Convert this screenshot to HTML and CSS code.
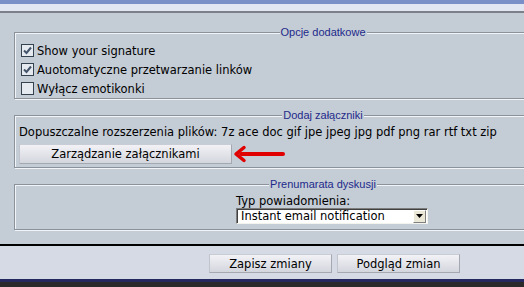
FILE: index.html
```html
<!DOCTYPE html>
<html lang="pl">
<head>
	<meta charset="utf-8">
	<link rel="stylesheet" href="styles.css">
</head>
<body>
	<div class="topbar"></div>
	<div class="panel">
		<fieldset class="box opts">
			<legend>Opcje dodatkowe</legend>
			<label class="row">
				<svg class="cb" width="13" height="13" viewBox="0 0 13 13"><rect x="0.5" y="0.5" width="12" height="12" fill="#e4eaf0" stroke="#34414f"/><path d="M3 6.5 L5.5 9 L10 3.5" fill="none" stroke="#44546a" stroke-width="2"/></svg>
				Show your signature
			</label>
			<label class="row">
				<svg class="cb" width="13" height="13" viewBox="0 0 13 13"><rect x="0.5" y="0.5" width="12" height="12" fill="#e4eaf0" stroke="#34414f"/><path d="M3 6.5 L5.5 9 L10 3.5" fill="none" stroke="#44546a" stroke-width="2"/></svg>
				Auotomatyczne przetwarzanie linków
			</label>
			<label class="row">
				<svg class="cb" width="13" height="13" viewBox="0 0 13 13"><rect x="0.5" y="0.5" width="12" height="12" fill="#e4eaf0" stroke="#34414f"/></svg>
				Wyłącz emotikonki
			</label>
		</fieldset>

		<fieldset class="box attach">
			<legend>Dodaj załączniki</legend>
			<div class="exts">Dopuszczalne rozszerzenia plików: 7z ace doc gif jpe jpeg jpg pdf png rar rtf txt zip</div>
			<div class="attach-row">
				<button class="btn btn-wide">Zarządzanie załącznikami</button>
				<svg class="arrow" width="52" height="18" viewBox="0 0 52 18"><path d="M8 9 H50" stroke="#e00000" stroke-width="4" stroke-linecap="round"/><path d="M11 2.5 L3 9 L11 15.5" fill="none" stroke="#e00000" stroke-width="3.5" stroke-linecap="round" stroke-linejoin="round"/></svg>
			</div>
		</fieldset>

		<fieldset class="box subscr">
			<legend>Prenumarata dyskusji</legend>
			<div class="notify">
				<div class="notify-label">Typ powiadomienia:</div>
				<div class="select">
					<span class="select-text">Instant email notification</span>
					<span class="select-btn"><svg width="7" height="4" viewBox="0 0 7 4"><path d="M0 0 H7 L3.5 4 Z" fill="#000"/></svg></span>
				</div>
			</div>
		</fieldset>
	</div>
	<div class="footer">
		<button class="btn btn-foot">Zapisz zmiany</button>
		<button class="btn btn-foot">Podgląd zmian</button>
	</div>
</body>
</html>
```

FILE: styles.css
```css
body {
	margin: 0;
	background: #2a2a2a;
	font-family: "DejaVu Sans", Verdana, sans-serif;
	font-size: 11.5px;
	color: #000;
}
.topbar {
	height: 7px;
	background: #e2e6f2;
	border-top: 4px solid #7a8ec8;
	border-bottom: 2px solid #7c8088;
}
.panel {
	background: #c4ccd6;
	padding: 12px 0 14px 14px;
	overflow: hidden;
	border-bottom: 2px solid #000;
}
.box {
	width: 618px;
	box-sizing: border-box;
	margin: 0 0 9px 0;
	padding: 0 4px;
	border: 1px solid #8a929c;
	box-shadow: inset 1px 1px 0 #f2f4f8, 1px 1px 0 #f2f4f8;
}
.box:last-child {
	margin-bottom: 0;
}
.box legend {
	font-family: "Liberation Sans", Arial, sans-serif;
	font-size: 11px;
	line-height: 14px;
	color: #1e2a8a;
	padding: 0 1px;
	margin: 0 auto;
	background: #c4ccd6;
}
.opts {
	padding-top: 2px;
}
.row {
	display: flex;
	align-items: center;
	gap: 3px;
	height: 19px;
	padding-left: 2px;
}
.cb {
	display: block;
	flex: none;
}
.attach {
	padding-top: 3px;
	padding-bottom: 3px;
}
.exts {
	line-height: 14px;
	white-space: nowrap;
}
.attach-row {
	display: flex;
	align-items: center;
	gap: 1px;
	margin-top: 5px;
}
.btn {
	font-family: "DejaVu Sans", Verdana, sans-serif;
	font-size: 11.5px;
	color: #000;
	height: 20px;
	padding: 0;
	border: 1px solid #a4a8b0;
	border-top-color: #c8ccd4;
	border-left-color: #c0c4cc;
	background: linear-gradient(#f2f2f6, #d4d6de);
}
.btn-wide {
	width: 213px;
}
.arrow {
	display: block;
}
.subscr {
	padding-top: 3px;
	padding-bottom: 5px;
}
.notify {
	margin-left: 217px;
	width: 192px;
}
.notify-label {
	line-height: 14px;
}
.select {
	display: flex;
	align-items: center;
	justify-content: space-between;
	height: 16px;
	box-sizing: border-box;
	background: #fff;
	border: 1px solid;
	border-color: #7c7c7c #f4f4ee #f4f4ee #7c7c7c;
	box-shadow: inset 1px 1px 0 #404040;
	padding: 0 1px 0 4px;
}
.select-btn {
	display: flex;
	align-items: center;
	justify-content: center;
	width: 11px;
	height: 11px;
	background: #ece8d8;
	border: 1px solid;
	border-color: #fff #808080 #808080 #fff;
}
.footer {
	display: flex;
	gap: 5px;
	height: 25px;
	padding: 8px 0 0 209px;
	background: #d6dae4;
	border-bottom: 3px solid #24285e;
}
.btn-foot {
	width: 123px;
	height: 19px;
}
```
